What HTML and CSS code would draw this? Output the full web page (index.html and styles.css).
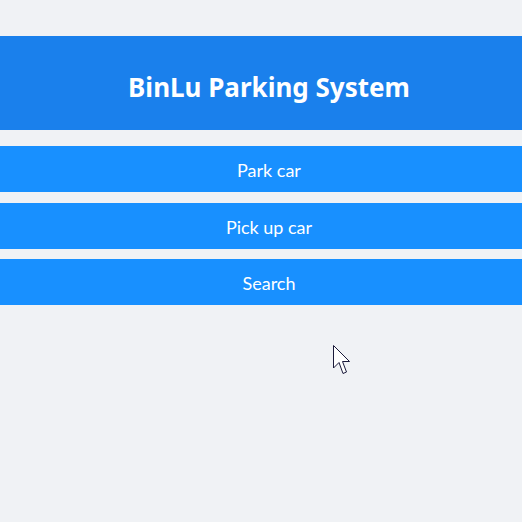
FILE: index.html
```
<!DOCTYPE html>
<html>
<head>
<meta charset="utf-8">
<link rel="stylesheet" href="styles.css">
</head>
<body>
<div class="app">
  <header class="header"><h1 class="title">BinLu Parking System</h1></header>
  <nav class="menu">
    <button class="btn">Park car</button>
    <button class="btn">Pick up car</button>
    <button class="btn">Search</button>
  </nav>
</div>
<svg class="cursor" width="19" height="31" viewBox="0 0 19 31">
  <path d="M0.5 0.5 L0.5 23 L6 17.5 L10 28.5 L13.5 27 L9.5 16.5 L16.5 16.5 Z" fill="#fff" stroke="#1a1a3a" stroke-width="1" stroke-linejoin="miter"/>
</svg>
</body>
</html>
```
FILE: styles.css
```
html, body { margin: 0; padding: 0; }
body {
  background: #f0f2f5;
  font-family: "Lato", "Noto Sans", sans-serif;
  width: 522px;
  height: 522px;
  overflow: hidden;
  position: relative;
}
.app { padding-top: 36px; width: 538px; }
.header {
  background: #1a80ec;
  height: 94px;
  box-sizing: border-box;
  padding-top: 8px;
  display: flex;
  align-items: center;
  justify-content: center;
}
.title {
  margin: 0;
  color: #fff;
  font-family: "Noto Sans", sans-serif;
  font-size: 26px;
  font-weight: 700;
}
.menu {
  margin-top: 16px;
  display: flex;
  flex-direction: column;
  gap: 10.5px;
}
.btn {
  height: 46px;
  border: none;
  background: #1890ff;
  color: #fff;
  font-family: inherit;
  font-size: 18px;
  padding: 2px 0 0;
  width: 100%;
}
.cursor {
  position: absolute;
  left: 333px;
  top: 345px;
}
```
